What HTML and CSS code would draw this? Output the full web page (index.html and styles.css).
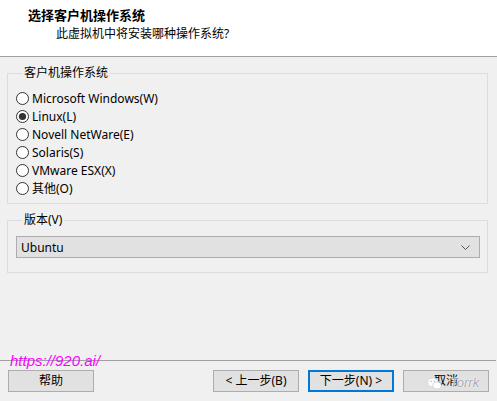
FILE: index.html
```html
<!DOCTYPE html>
<html lang="zh-CN">
<head>
<meta charset="utf-8">
<title>新建虚拟机向导</title>
<link rel="stylesheet" href="styles.css">
</head>
<body>
<div class="window">
  <header class="head">
    <div class="title">选择客户机操作系统</div>
    <div class="subtitle">此虚拟机中将安装哪种操作系统?</div>
  </header>

  <main class="content">
    <section class="group group-os">
      <div class="legend">客户机操作系统</div>
      <ul class="radios">
        <li class="radio"><svg class="rb" width="13" height="13" viewBox="0 0 13 13"><circle cx="6.5" cy="6.5" r="6" fill="#fff" stroke="#333" stroke-width="1"/></svg><span>Microsoft Windows(W)</span></li>
        <li class="radio"><svg class="rb" width="13" height="13" viewBox="0 0 13 13"><circle cx="6.5" cy="6.5" r="6" fill="#fff" stroke="#333" stroke-width="1"/><circle cx="6.5" cy="6.5" r="3.6" fill="#333"/></svg><span>Linux(L)</span></li>
        <li class="radio"><svg class="rb" width="13" height="13" viewBox="0 0 13 13"><circle cx="6.5" cy="6.5" r="6" fill="#fff" stroke="#333" stroke-width="1"/></svg><span>Novell NetWare(E)</span></li>
        <li class="radio"><svg class="rb" width="13" height="13" viewBox="0 0 13 13"><circle cx="6.5" cy="6.5" r="6" fill="#fff" stroke="#333" stroke-width="1"/></svg><span>Solaris(S)</span></li>
        <li class="radio"><svg class="rb" width="13" height="13" viewBox="0 0 13 13"><circle cx="6.5" cy="6.5" r="6" fill="#fff" stroke="#333" stroke-width="1"/></svg><span>VMware ESX(X)</span></li>
        <li class="radio"><svg class="rb" width="13" height="13" viewBox="0 0 13 13"><circle cx="6.5" cy="6.5" r="6" fill="#fff" stroke="#333" stroke-width="1"/></svg><span>其他(O)</span></li>
      </ul>
    </section>

    <section class="group group-ver">
      <div class="legend">版本(V)</div>
      <div class="combo">
        <span>Ubuntu</span>
        <svg class="chev" width="9" height="5" viewBox="0 0 9 5"><path d="M0.5 0.5 L4.5 4.5 L8.5 0.5" fill="none" stroke="#555" stroke-width="1"/></svg>
      </div>
    </section>
  </main>

  <footer class="foot">
    <span class="watermark">https://920.ai/</span>
    <button class="btn">帮助</button>
    <div class="nav">
      <button class="btn">&lt; 上一步(B)</button>
      <button class="btn btn-default">下一步(N) &gt;</button>
      <button class="btn btn-cancel">取消
        <span class="wm2">
          <svg width="15" height="13" viewBox="0 0 15 13"><ellipse cx="6" cy="5.5" rx="5.5" ry="4.6" fill="#fff" stroke="#d0d0d0" stroke-width="0.8"/><ellipse cx="10" cy="8.5" rx="4.2" ry="3.5" fill="#fff" stroke="#d0d0d0" stroke-width="0.8"/><circle cx="4.2" cy="4.3" r="0.8" fill="#bbb"/><circle cx="7.6" cy="4.3" r="0.8" fill="#bbb"/></svg>
          <span class="wm2-text">Torrk</span>
        </span>
      </button>
    </div>
  </footer>
</div>
</body>
</html>
```
FILE: styles.css
```css
* { box-sizing: border-box; }
html, body { margin: 0; padding: 0; }
body {
  width: 497px;
  height: 401px;
  overflow: hidden;
  background: #f0f0f0;
  font-family: "Noto Sans", "Noto Sans CJK SC", sans-serif;
  font-size: 12px;
  color: #000;
}
.window {
  height: 401px;
  display: flex;
  flex-direction: column;
}
.head {
  height: 57px;
  background: #fff;
  border-bottom: 1px solid #a0a0a0;
  padding: 7px 0 0 28px;
}
.title {
  font-weight: bold;
  font-size: 13px;
  line-height: 16px;
}
.subtitle {
  margin: 2px 0 0 28px;
  line-height: 17px;
}
.content {
  padding: 16px 0 0 7px;
}
.group {
  width: 481px;
  border: 1px solid #dcdcdc;
}
.legend {
  display: block;
  width: fit-content;
  background: #f0f0f0;
  margin: -9px 0 0 6px;
  padding: 0 2px;
  line-height: 16px;
  height: 16px;
}
.group-os {
  height: 131px;
  padding: 0 8px;
}
.radios {
  list-style: none;
  margin: 8px 0 0 0;
  padding: 0;
}
.radio {
  height: 18px;
  display: flex;
  align-items: center;
  gap: 3px;
}
.rb { flex: none; }
.group-ver {
  margin-top: 16px;
  height: 53px;
  padding: 0 7px 0 8px;
}
.combo {
  margin-top: 8px;
  height: 22px;
  width: 464px;
  background: #e1e1e1;
  border: 1px solid #adadad;
  display: flex;
  align-items: center;
  justify-content: space-between;
  padding: 0 9px 0 4px;
}
.chev { flex: none; }
.foot {
  margin-top: auto;
  position: relative;
  border-top: 1px solid #a0a0a0;
  width: 496px;
  height: 41px;
  padding: 9px 0 0 8px;
  display: flex;
  align-items: flex-start;
}
.nav {
  margin-left: auto;
  display: flex;
  gap: 9px;
  padding-right: 7px;
}
.btn {
  width: 86px;
  height: 22px;
  background: #e1e1e1;
  border: 1px solid #adadad;
  font-family: "Noto Sans", "Noto Sans CJK SC", sans-serif;
  font-size: 12px;
  color: #000;
  padding: 0;
  line-height: 18px;
}
.btn-default {
  border: 2px solid #0078d7;
}
.btn-cancel {
  position: relative;
}
.wm2 {
  position: absolute;
  left: 23px;
  top: 3px;
  display: flex;
  align-items: center;
  gap: 2px;
}
.wm2-text {
  font-family: "Liberation Sans", sans-serif;
  font-style: italic;
  font-size: 13px;
  color: #a8a8a8;
  text-shadow: 0 0 1px #fff, 0 0 2px #fff;
  margin-left: 6px;
}
.watermark {
  position: absolute;
  left: 10px;
  top: -8px;
  font-family: "Liberation Sans", sans-serif;
  font-style: italic;
  font-size: 15px;
  line-height: 16px;
  color: #ff00ff;
}
```
